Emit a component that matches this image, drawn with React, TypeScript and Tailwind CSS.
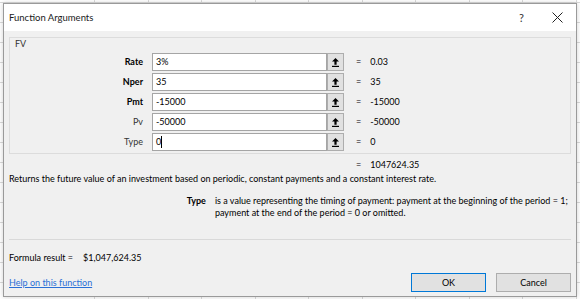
import React from "react";

const args = [
  { name: "Rate", value: "3%", result: "0.03", bold: true },
  { name: "Nper", value: "35", result: "35", bold: true },
  { name: "Pmt", value: "-15000", result: "-15000", bold: true },
  { name: "Pv", value: "-50000", result: "-50000", bold: false },
  { name: "Type", value: "0", result: "0", bold: false, caret: true },
];

const cols = Array.from({ length: 10 });
const rows = Array.from({ length: 15 });

// collapse-dialog arrow (bar with an arrow pointing up)
const CollapseIcon = () => (
  <svg width="7" height="9" viewBox="0 0 7 9">
    <path d="M3.5 0 L7 3.6 H4.6 V6.8 H2.4 V3.6 H0 Z" fill="#000" />
    <rect x="0" y="7.8" width="7" height="1.2" fill="#000" />
  </svg>
);

const App = () => {
  return (
    <div
      className="relative w-[580px] h-[299px] overflow-hidden bg-white text-[9px] leading-[12px] text-black"
      style={{ fontFamily: 'Lato, "Open Sans", sans-serif' }}
    >
      {/* sheet behind the dialog */}
      <div className="absolute inset-0 flex">
        <div className="w-[95px] shrink-0 border-r border-[#dadada]" />
        {cols.map((_, i) => (
          <div key={i} className="w-[53.5px] shrink-0 border-r border-[#dadada]" />
        ))}
      </div>
      <div className="absolute inset-0 flex flex-col pt-[2px]">
        {rows.map((_, i) => (
          <div key={i} className="h-[20px] shrink-0 border-t border-[#dadada]" />
        ))}
      </div>

      {/* dialog */}
      <div className="absolute left-[3px] top-[3px] w-[574px] h-[294px] border border-[#9a9a9a] bg-[#f0f0f0] shadow-[0_0_5px_rgba(0,0,0,0.18)] flex flex-col">
        <div className="h-[27px] bg-white flex items-center pl-[5px] shrink-0">
          <span className="text-[9.5px] text-[#1a1a1a]">Function Arguments</span>
          <span className="ml-auto text-[11px] text-[#333]">?</span>
          <span className="ml-[28px] mr-[13px] flex items-center">
            <svg width="11" height="11" viewBox="0 0 11 11">
              <path d="M0.5 0.5 L10.5 10.5 M10.5 0.5 L0.5 10.5" stroke="#222" strokeWidth="1" />
            </svg>
          </span>
        </div>

        <div className="flex-1 flex flex-col px-[5px]">
          {/* argument frame */}
          <div className="mt-[6px] h-[117px] border border-[#dcdcdc] flex flex-col">
            <div className="pl-[5px] h-[15px] leading-[12px] text-[#333]">FV</div>
            <div className="flex flex-col gap-[2px]">
              {args.map((a) => (
                <div key={a.name} className="flex items-center h-[18px]">
                  <div
                    className={
                      a.bold
                        ? "w-[133px] text-right font-bold"
                        : "w-[133px] text-right text-[#333]"
                    }
                  >
                    {a.name}
                  </div>
                  <div className="ml-[9px] w-[175px] h-[18px] bg-white border border-[#a5a5a5] flex items-center pl-[3px]">
                    <span>{a.value}</span>
                    {a.caret && <span className="w-px h-[12px] bg-black" />}
                  </div>
                  <div className="w-[17px] h-[18px] bg-[#e1e1e1] border border-[#adadad] flex items-center justify-center">
                    <CollapseIcon />
                  </div>
                  <span className="ml-[12px]">=</span>
                  <span className="ml-[9px]">{a.result}</span>
                </div>
              ))}
            </div>
          </div>

          <div className="flex items-center h-[12px] mt-[5px]">
            <span className="ml-[347px]">=</span>
            <span className="ml-[9px]">1047624.35</span>
          </div>

          <div className="mt-[2px] h-[12px]">
            Returns the future value of an investment based on periodic, constant payments and a constant interest rate.
          </div>

          <div className="mt-[10px] flex">
            <div className="w-[198px] text-right font-bold">Type</div>
            <div className="ml-[9px] w-[358px]">
              is a value representing the timing of payment: payment at the beginning of the period = 1; payment at the end of the period = 0 or omitted.
            </div>
          </div>

          <div className="mt-[20px] border-t border-[#d9d9d9]" />

          <div className="mt-[12px] flex h-[12px]">
            <span>Formula result =</span>
            <span className="ml-[10px]">$1,047,624.35</span>
          </div>

          <div className="mt-[9px] flex items-center">
            <a href="#" className="text-[#2a6fd6] underline">
              Help on this function
            </a>
            <button className="ml-auto w-[75px] h-[19px] bg-[#e1e1e1] border border-[#0078d7] text-black">
              OK
            </button>
            <button className="ml-[10px] w-[75px] h-[19px] bg-[#e1e1e1] border border-[#adadad] text-black">
              Cancel
            </button>
          </div>
        </div>
      </div>
    </div>
  );
};

export default App;
